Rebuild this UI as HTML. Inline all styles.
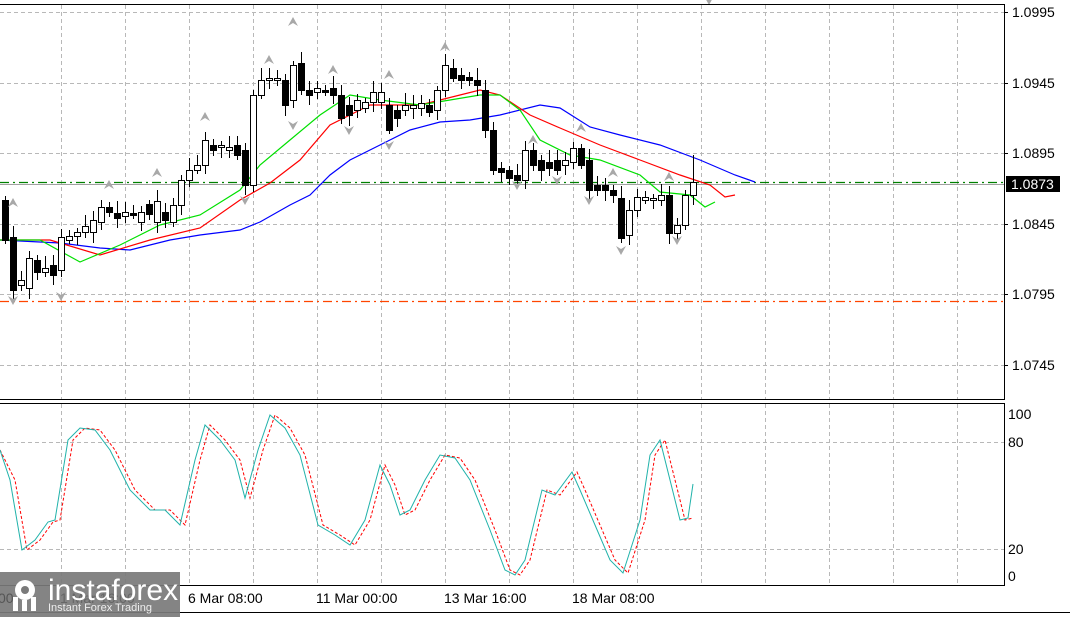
<!DOCTYPE html>
<html><head><meta charset="utf-8"><style>
html,body{margin:0;padding:0;background:#fff;width:1070px;height:617px;overflow:hidden}
svg{display:block}
text{font-family:"Liberation Sans",sans-serif;font-size:14px;fill:#000}
</style></head><body>
<svg id="s" width="1070" height="617" xmlns="http://www.w3.org/2000/svg">
<rect width="1070" height="617" fill="#fff"/>
<g id="grid" stroke="#b8b8b8" stroke-dasharray="4,3" stroke-width="1"></g>
<line x1="0" y1="184.5" x2="1004" y2="184.5" stroke="#a0a0a0"/>
<line x1="0" y1="182.5" x2="1004" y2="182.5" stroke="#008000" stroke-width="1.3" stroke-dasharray="9,4,2,4"/>
<line x1="0" y1="301.5" x2="1004" y2="301.5" stroke="#ff4500" stroke-width="1.3" stroke-dasharray="9,4,2,4"/>
<g id="ma" fill="none" stroke-width="1.2"></g>
<g id="c"></g>
<g id="fr" fill="#a8a8a8"></g>
<g id="st" fill="none"></g>
<g stroke="#000" fill="none">
<path d="M0 4.5H1004.5V399.5H0"/>
<path d="M0 403.5H1004.5V585.5H0"/>
<line x1="0" y1="612.5" x2="1070" y2="612.5"/>
</g>
<g id="lab"></g>
<rect x="1006" y="176" width="54" height="16" fill="#000"/>
<text x="1011" y="189" style="fill:#fff">1.0873</text>
<text x="188" y="603">6 Mar 08:00</text>
<text x="316" y="603">11 Mar 00:00</text>
<text x="444" y="603">13 Mar 16:00</text>
<text x="572" y="603">18 Mar 08:00</text>
<rect x="0" y="572" width="180" height="45" fill="#7a7a7a" opacity="0.92"/>
<text x="-2" y="603" style="fill:#555">00</text>
<text x="60" y="603" style="fill:#666">1 Mar 16:00</text>
<g fill="#fff"><circle cx="25" cy="590" r="10"/><circle cx="25" cy="590" r="4" fill="#7a7a7a"/><rect x="13" y="597" width="5" height="14"/><rect x="31" y="597" width="5" height="14"/><rect x="22" y="600" width="5" height="11"/></g>
<text x="48" y="600" style="fill:#fff;font-size:30px">instaforex</text>
<text x="48" y="611" style="fill:#eee;font-size:11px">Instant Forex Trading</text>
</svg>
<script>
var NS="http://www.w3.org/2000/svg";
function el(p,t,a){var e=document.createElementNS(NS,t);for(var k in a)e.setAttribute(k,a[k]);p.appendChild(e);return e}
var g=document.getElementById('grid');
[12,83,153,224,294,365].forEach(function(y){el(g,'line',{x1:0,y1:y+.5,x2:1004,y2:y+.5})});
[442,549].forEach(function(y){el(g,'line',{x1:0,y1:y+.5,x2:1004,y2:y+.5})});
for(var x=61;x<1004;x+=64){el(g,'line',{x1:x+.5,y1:5,x2:x+.5,y2:399});el(g,'line',{x1:x+.5,y1:404,x2:x+.5,y2:585})}
var lab=document.getElementById('lab');
[["1.0995",12],["1.0945",83],["1.0895",153],["1.0845",224],["1.0795",294],["1.0745",365]].forEach(function(a){var t=el(lab,'text',{x:1012,y:a[1]+5});t.textContent=a[0];el(lab,'line',{x1:1004,y1:a[1]+.5,x2:1008,y2:a[1]+.5,stroke:'#000'})});
[["100",414],["80",442],["20",549],["0",576]].forEach(function(a){var t=el(lab,'text',{x:1008,y:a[1]+5});t.textContent=a[0]});
var C=[[200,240],[237,290],[285,280],[288,258],[260,272],[272,268],[265,275],[270,237],[240,236],[236,232],[232,226],[232,220],[222,207],[207,212],[213,218],[216,212],[213,215],[222,212],[204,214],[222,201],[212,220],[222,205],[205,180],[180,170],[170,165],[165,140],[145,150],[147,145],[150,147],[145,155],[150,185],[185,95],[95,80],[80,78],[80,78],[80,105],[100,65],[63,90],[90,95],[92,88],[90,92],[88,95],[95,118],[105,115],[110,100],[108,102],[102,92],[102,92],[105,130],[110,118],[110,105],[108,105],[108,103],[105,112],[110,90],[90,65],[68,78],[75,80],[77,80],[80,85],[90,130],[130,170],[168,172],[170,178],[175,180],[180,150],[150,165],[160,170],[162,168],[160,170],[165,160],[162,148],[148,165],[160,190],[185,190],[185,190],[190,195],[198,238],[235,210],[210,197],[200,197],[200,198],[200,195],[195,233],[233,225],[225,195],[195,182]];
var cg=document.getElementById('c');
C.forEach(function(c,i){var x=5+8*i,o=c[0],cl=c[1],t=Math.min(o,cl),b=Math.max(o,cl);
var hi=t-4-(i*7%9),lo=b+4+(i*5%8);if(i==86)hi=155;
el(cg,'line',{x1:x+.5,y1:hi,x2:x+.5,y2:lo,stroke:'#000'});
el(cg,'rect',{x:x-2.5,y:t+.5,width:6,height:Math.max(b-t,1),fill:cl>o?'#000':'#fff',stroke:'#000'})});
function pl(p,pts,col,extra){var a={points:pts.map(function(q){return q.join(',')}).join(' '),stroke:col,fill:'none'};for(var k in extra)a[k]=extra[k];el(p,'polyline',a)}
var ma=document.getElementById('ma');
pl(ma,[[0,240],[60,243],[100,248],[130,250],[170,240],[200,235],[240,230],[260,222],[290,205],[310,195],[330,175],[350,160],[380,145],[410,130],[440,122],[470,120],[500,115],[540,105],[560,108],[590,127],[620,135],[660,145],[700,160],[735,175],[755,182]],'#0000ff');
pl(ma,[[0,240],[50,240],[100,255],[150,240],[200,228],[240,200],[270,183],[300,160],[330,125],[370,105],[420,105],[460,95],[480,90],[500,95],[530,115],[560,128],[600,145],[640,160],[680,175],[710,185],[725,197],[735,195]],'#ff0000');
pl(ma,[[0,240],[40,240],[80,262],[120,245],[160,225],[200,215],[240,190],[260,165],[290,140],[320,115],[350,95],[380,100],[420,105],[450,100],[480,95],[500,95],[520,110],[540,140],[570,155],[600,160],[640,175],[660,192],[690,195],[705,207],[715,202]],'#00e000');
var fr=document.getElementById('fr');
[[13,198],[109,180],[157,168],[205,112],[269,55],[293,17],[333,65],[389,70],[445,42],[533,135],[581,123],[613,168],[669,172]].forEach(function(p){el(fr,'path',{d:'M'+p[0]+' '+p[1]+'l-5 9l5-3l5 3z'})});
[[13,305],[61,301],[245,205],[293,130],[349,135],[389,150],[517,190],[557,185],[589,205],[621,255],[677,245],[709,5]].forEach(function(p){el(fr,'path',{d:'M'+p[0]+' '+p[1]+'l-5-9l5 3l5-3z'})});
var st=document.getElementById('st');
var T=[[0,450],[10,480],[22,550],[35,540],[48,522],[55,520],[68,440],[80,428],[95,430],[110,450],[130,490],[150,510],[165,510],[180,525],[195,460],[205,425],[220,440],[235,460],[245,498],[258,450],[270,415],[285,428],[300,455],[318,525],[335,535],[350,545],[365,520],[380,465],[390,485],[400,515],[410,510],[425,480],[440,455],[455,458],[470,480],[490,530],[505,570],[515,575],[525,560],[542,490],[555,495],[572,472],[580,490],[595,525],[610,560],[623,573],[640,520],[650,455],[660,440],[670,480],[680,520],[688,518],[693,484]];
var R=T.map(function(p,i){return [p[0]+5,p[1]]});R.pop();R[0]=[0,450];
pl(st,R,'#ff0000',{'stroke-dasharray':'3,2'});
pl(st,T,'#20b2aa');
</script>
</body></html>
